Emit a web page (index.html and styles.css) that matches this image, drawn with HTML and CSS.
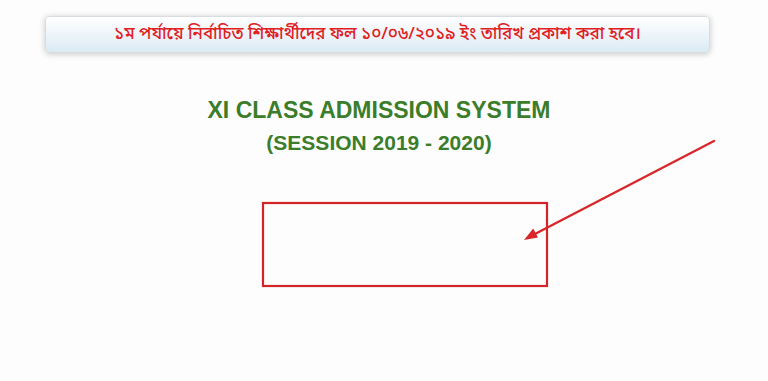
FILE: index.html
```html
<!DOCTYPE html>
<html lang="bn">
<head>
  <meta charset="UTF-8">
  <title>XI Class Admission System</title>
  <link rel="stylesheet" href="styles.css">
</head>
<body>

  <div class="page">
    <!-- Notice -->
    <div class="notice">১ম পর্যায়ে নির্বাচিত শিক্ষার্থীদের ফল ১০/০৬/২০১৯ ইং তারিখ প্রকাশ করা হবে।</div>

    <!-- Heading -->
    <h1 class="title">XI CLASS ADMISSION SYSTEM</h1>
    <h2 class="session">(SESSION 2019 - 2020)</h2>
  </div>

  <!-- Annotation drawn over the page -->
  <svg class="markup" width="768" height="381" viewBox="0 0 768 381">
    <rect x="263" y="203" width="284" height="83" fill="none" stroke="#d3242a" stroke-width="2.2"/>
    <line x1="714" y1="141" x2="533" y2="235" stroke="#d8262a" stroke-width="2.4" stroke-linecap="round"/>
    <polygon points="524,240 538,237.6 533.2,228.4" fill="#d8262a"/>
  </svg>

</body>
</html>
```

FILE: styles.css
```css
body {
  margin: 0;
  background: #fdfdfd;
  font-family: "Liberation Sans", Arial, sans-serif;
  position: relative;
  height: 381px;
  overflow: hidden;
}

.page {
  width: 758px;
  padding-top: 16px;
}

.notice {
  margin: 0 48px 0 45px;
  height: 35px;
  display: flex;
  align-items: center;
  justify-content: center;
  border: 1px solid #d9dde0;
  border-radius: 4px;
  background: linear-gradient(#ffffff, #dbeaf4);
  box-shadow: 0 1px 6px rgba(0, 0, 0, 0.22);
  color: #e0201f;
  font-family: "Noto Sans Bengali", "Noto Sans", sans-serif;
  font-size: 17px;
  font-weight: 500;
}

.title {
  margin: 43px 0 0;
  text-align: center;
  color: #3b7d2a;
  font-size: 23px;
  line-height: 28px;
  font-weight: bold;
}

.session {
  margin: 6px 0 0;
  text-align: center;
  color: #3b7d2a;
  font-size: 21px;
  line-height: 26px;
  font-weight: bold;
}

.markup {
  position: absolute;
  left: 0;
  top: 0;
}
```
